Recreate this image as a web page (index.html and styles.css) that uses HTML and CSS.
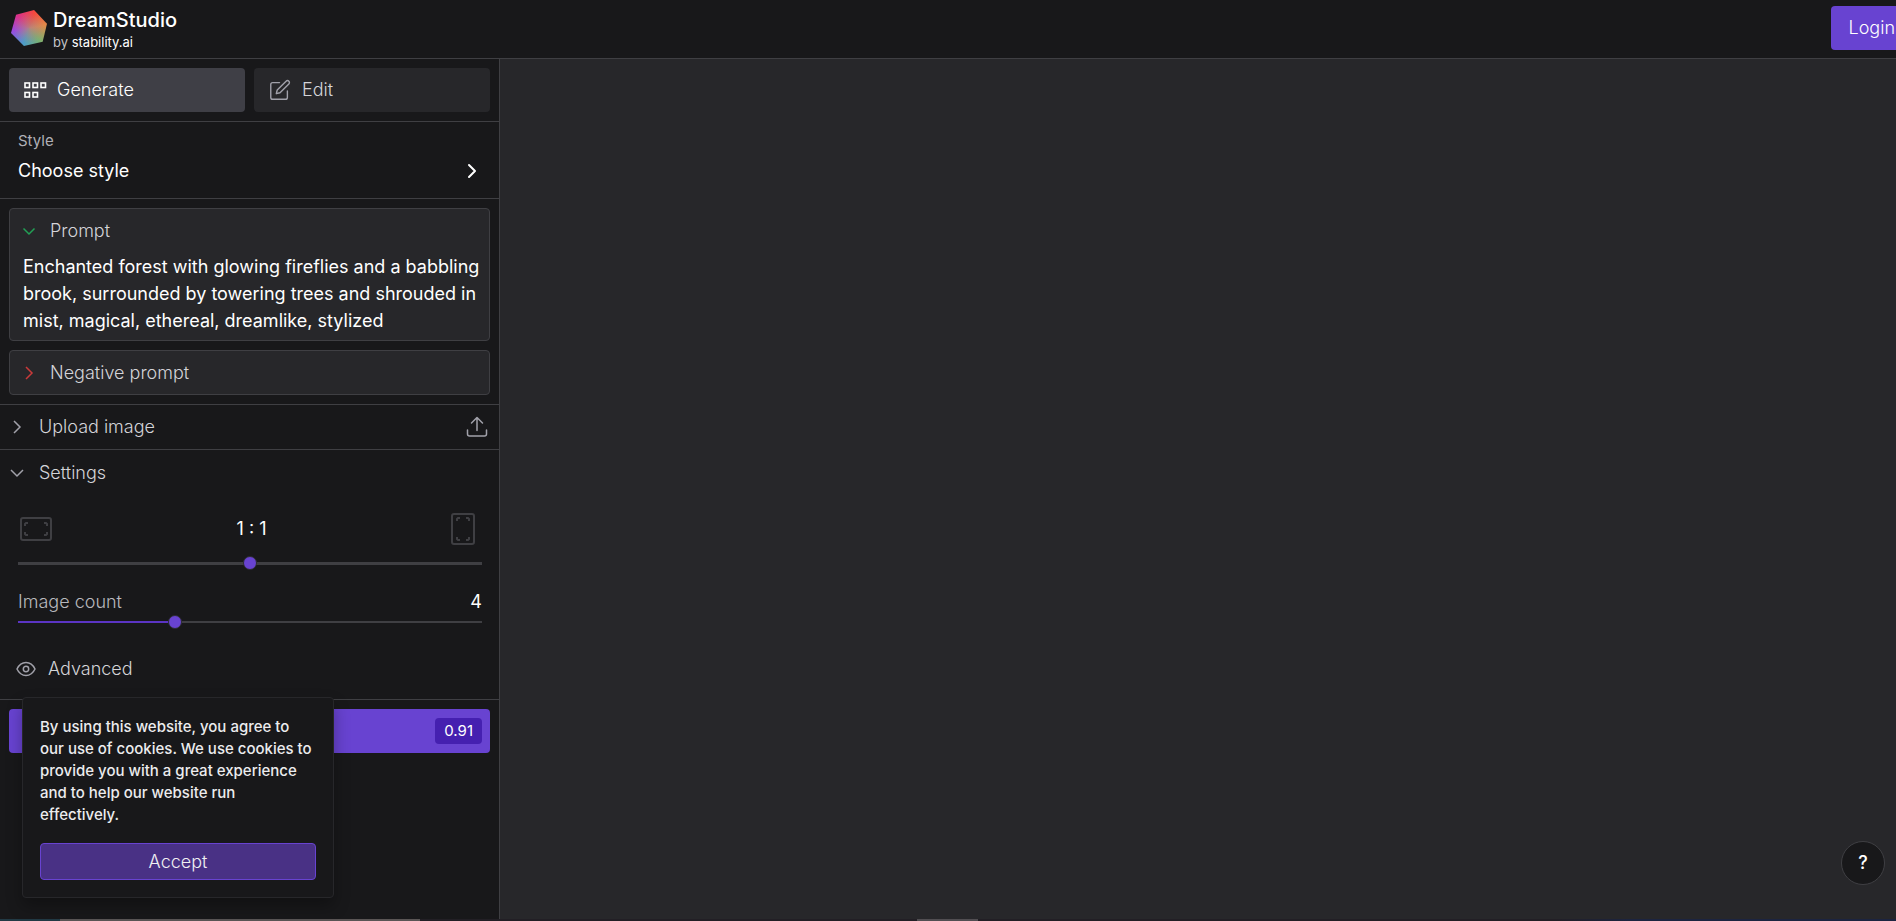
FILE: index.html
```html
<!DOCTYPE html>
<html lang="en">
<head>
    <meta charset="UTF-8">
    <meta name="viewport" content="width=device-width, initial-scale=1.0">
    <title>DreamStudio</title>
    <link rel="stylesheet" href="styles.css">
</head>
<body>
    <header class="topbar">
        <div class="brand">
            <div class="logo" aria-hidden="true"></div>
            <div class="brand-text">
                <h1>DreamStudio</h1>
                <p class="byline">by <a href="#">stability.ai</a></p>
            </div>
        </div>
        <button class="login">Login</button>
    </header>

    <div class="workspace">
        <aside class="sidebar">
            <nav class="tabs">
                <button class="tab active">
                    <svg width="24" height="18" viewBox="0 0 24 18" fill="none" stroke="currentColor" stroke-width="1.6">
                        <rect x="2" y="2" width="4.5" height="4.5"/>
                        <rect x="10" y="2" width="4.5" height="4.5"/>
                        <rect x="18" y="2" width="4.5" height="4.5"/>
                        <rect x="2" y="11.5" width="4.5" height="4.5"/>
                        <rect x="10" y="11.5" width="4.5" height="4.5"/>
                    </svg>
                    Generate
                </button>
                <button class="tab">
                    <svg width="24" height="24" viewBox="-1 -1 26 26" fill="none" stroke="currentColor" stroke-width="1.5" stroke-linecap="round" stroke-linejoin="round">
                        <path d="M11.5 4H4a2 2 0 0 0-2 2v14a2 2 0 0 0 2 2h14a2 2 0 0 0 2-2v-7"/>
                        <path d="M18.6 2.4a2.1 2.1 0 0 1 3 3L12 15l-4 1 1-4z"/>
                    </svg>
                    Edit
                </button>
            </nav>

            <button class="style-picker">
                <span>
                    <span class="style-label">Style</span>
                    <span class="style-value">Choose style</span>
                </span>
                <svg width="10" height="16" viewBox="0 0 10 16" fill="none" stroke="currentColor" stroke-width="2" stroke-linecap="round" stroke-linejoin="round"><path d="M2 2l6 6-6 6"/></svg>
            </button>

            <section class="prompts">
                <div class="box">
                    <label class="box-title" for="prompt">
                        <svg class="green" width="14" height="14" viewBox="0 0 14 14" fill="none" stroke="currentColor" stroke-width="1.5"><path d="M1.5 4.5L7 10l5.5-5.5"/></svg>
                        Prompt
                    </label>
                    <textarea id="prompt" rows="3">Enchanted forest with glowing fireflies and a babbling brook, surrounded by towering trees and shrouded in mist, magical, ethereal, dreamlike, stylized</textarea>
                </div>
                <button class="box box-title">
                    <svg class="red" width="14" height="14" viewBox="0 0 14 14" fill="none" stroke="currentColor" stroke-width="1.5"><path d="M4 1L10 7l-6 6"/></svg>
                    Negative prompt
                </button>
            </section>

            <button class="row upload">
                <svg width="14" height="14" viewBox="0 0 14 14" fill="none" stroke="currentColor" stroke-width="1.5"><path d="M4 1L10 7l-6 6"/></svg>
                Upload image
                <svg class="upload-icon" width="22" height="22" viewBox="0 0 22 22" fill="none" stroke="currentColor" stroke-width="1.5" stroke-linecap="round" stroke-linejoin="round">
                    <path d="M11 14.5V1.75M5.5 7L11 1.5 16.5 7"/>
                    <path d="M1.5 14v4a2 2 0 0 0 2 2h15a2 2 0 0 0 2-2v-4"/>
                </svg>
            </button>

            <section class="settings">
                <button class="row">
                    <svg width="14" height="14" viewBox="0 0 14 14" fill="none" stroke="currentColor" stroke-width="1.5"><path d="M1 4l6 6 6-6"/></svg>
                    Settings
                </button>

                <div class="ratio">
                    <div class="ratio-head">
                        <svg width="32" height="24" viewBox="0 0 32 24" fill="none" stroke="currentColor" stroke-width="2">
                            <rect x="1" y="1" width="30" height="22" rx="2"/>
                            <path d="M5 9V7l1-1h2M24 6h2l1 1v2M27 15v2l-1 1h-2M8 18H6l-1-1v-2"/>
                        </svg>
                        <label for="ratio">1 : 1</label>
                        <svg width="24" height="32" viewBox="0 0 24 32" fill="none" stroke="currentColor" stroke-width="2">
                            <rect x="1" y="1" width="22" height="30" rx="2"/>
                            <path d="M6 8V6l1-1h2M15 5h2l1 1v2M18 24v2l-1 1h-2M9 27H7l-1-1v-2"/>
                        </svg>
                    </div>
                    <input class="slider thick" type="range" id="ratio" min="0" max="10" value="5">
                </div>

                <div class="count">
                    <div class="count-head">
                        <label for="count">Image count</label>
                        <output for="count">4</output>
                    </div>
                    <input class="slider filled" type="range" id="count" min="1" max="10" value="4" style="--fill: 33.3%">
                </div>

                <button class="advanced">
                    <svg width="20" height="16" viewBox="0 0 20 16" fill="none" stroke="currentColor" stroke-width="1.5">
                        <path d="M1 8c2-4.2 5.3-6.5 9-6.5S17 3.800 19 8c-2 4.200-5.300 6.500-9 6.500S3 12.200 1 8z"/>
                        <circle cx="10" cy="8" r="2.7"/>
                    </svg>
                    Advanced
                </button>
            </section>

            <div class="actions">
                <button class="dream"><span class="cost">0.91</span></button>
            </div>
        </aside>
        <main class="canvas"></main>
    </div>

    <div class="taskbar"><span class="search"></span><span class="window"></span></div>

    <div class="cookies">
        <p>By using this website, you agree to our use of cookies. We use cookies to provide you with a great experience and to help our website run effectively.</p>
        <button class="accept">Accept</button>
    </div>

    <button class="help">?</button>
</body>
</html>
```
FILE: styles.css
```css
* {
    box-sizing: border-box;
}

body {
    margin: 0;
    height: 100vh;
    display: flex;
    flex-direction: column;
    overflow: hidden;
    background-color: #18181a;
    color: #fff;
    font-family: Inter, sans-serif;
    font-size: 18px;
    line-height: 26px;
}

h1, p {
    margin: 0;
}

a {
    color: inherit;
    text-decoration: none;
}

button, textarea {
    font: inherit;
    color: inherit;
    background: none;
    border: none;
    margin: 0;
    padding: 0;
    text-align: left;
    cursor: pointer;
}

svg {
    display: block;
    flex: none;
}

.topbar {
    display: flex;
    justify-content: space-between;
    align-items: center;
    height: 59px;
    flex: none;
    padding: 0 0 2px 11px;
    border-bottom: 1px solid #3f3f43;
}

.brand {
    display: flex;
    align-items: center;
    gap: 6px;
}

.brand-text {
    padding-top: 4px;
}

.logo {
    width: 36px;
    height: 36px;
    clip-path: polygon(64% 0, 100% 38%, 88% 88%, 36% 100%, 0 64%, 14% 13%);
    background: radial-gradient(circle, rgba(180, 130, 130, 0.9), rgba(180, 130, 130, 0) 60%),
        conic-gradient(from 20deg, #f5493d, #e08a4a 60deg, #7bb070 120deg, #4c9cc8 180deg, #9a4be0 240deg, #dc3186 300deg, #f5493d);
}

h1 {
    font-size: 20px;
    font-weight: 500;
    line-height: 24px;
}

.byline {
    font-size: 13px;
    line-height: 20px;
    color: #c4c4c8;
}

.byline a {
    color: #fff;
}

.login {
    height: 44px;
    padding: 0 18px;
    margin-right: -17px;
    border-radius: 4px;
    background-color: #6843d1;
    font-weight: 300;
}

.workspace {
    flex: 1;
    display: flex;
    min-height: 0;
}

.sidebar {
    width: 500px;
    flex: none;
    border-right: 1px solid #3f3f43;
}

.canvas {
    flex: 1;
    background-color: #27272a;
}

.tabs {
    display: flex;
    gap: 9px;
    padding: 9px;
    border-bottom: 1px solid #3f3f43;
}

.tab {
    flex: 1;
    display: flex;
    align-items: center;
    gap: 10px;
    height: 44px;
    padding: 0 14px;
    border-radius: 4px;
    background-color: #27272a;
    color: #d4d4d8;
    font-weight: 300;
}

.tab svg {
    color: #a1a1aa;
}

.tab.active {
    background-color: #3f3f46;
    color: #fff;
}

.tab.active svg {
    color: #fff;
}

.style-picker {
    display: flex;
    justify-content: space-between;
    align-items: flex-end;
    width: 100%;
    height: 77px;
    padding: 0 22px 14px 18px;
    border-bottom: 1px solid #3f3f43;
}

.style-label, .style-value {
    display: block;
}

.style-label {
    font-size: 15px;
    line-height: 34px;
    color: #b0b0b6;
}

.style-picker svg {
    margin-bottom: 5px;
}

.prompts {
    display: flex;
    flex-direction: column;
    gap: 9px;
    padding: 9px;
    border-bottom: 1px solid #3f3f43;
}

.box {
    border: 1px solid #3f3f43;
    border-radius: 4px;
    background-color: #27272a;
}

.box-title {
    display: flex;
    align-items: center;
    gap: 14px;
    height: 44px;
    padding: 0 12px;
    color: #d4d4d8;
    font-weight: 300;
}

.box.box-title {
    height: 45px;
}

.box textarea {
    display: block;
    width: 100%;
    height: 87px;
    padding: 0 4px 0 13px;
    line-height: 27px;
    resize: none;
    outline: none;
    overflow: hidden;
}

.green {
    color: #22a055;
}

.red {
    color: #c93a3a;
}

.row {
    display: flex;
    align-items: center;
    gap: 15px;
    width: 100%;
    height: 45px;
    padding: 0 11px 0 10px;
    color: #d4d4d8;
    font-weight: 300;
}

.row svg, .advanced svg {
    color: #a1a1aa;
}

.upload {
    border-bottom: 1px solid #3f3f43;
}

.upload-icon {
    margin-left: auto;
}

.settings {
    padding-bottom: 17px;
    border-bottom: 1px solid #3f3f43;
}

.ratio, .count {
    padding: 0 17px 0 18px;
}

.ratio-head {
    display: flex;
    justify-content: space-between;
    align-items: center;
    padding: 18px 7px 0 2px;
    color: #3f3f43;
}

.ratio-head label {
    color: #fff;
}

.slider {
    -webkit-appearance: none;
    appearance: none;
    display: block;
    width: 100%;
    height: 14px;
    margin: 0;
    background: linear-gradient(#3f3f43, #3f3f43) center / 100% 2px no-repeat;
    cursor: pointer;
}

.slider.thick {
    margin-top: 11px;
    background-size: 100% 3px;
}

.slider.filled {
    background-image: linear-gradient(to right, #5b34c4 var(--fill), #3f3f43 var(--fill));
}

.slider::-webkit-slider-thumb {
    -webkit-appearance: none;
    width: 14px;
    height: 14px;
    border: 1px solid #2c2c30;
    border-radius: 50%;
    background-color: #6843d1;
}

.count-head {
    display: flex;
    justify-content: space-between;
    padding-top: 19px;
    color: #b8b8be;
    font-weight: 300;
}

.count-head output {
    color: #fff;
    font-weight: 400;
}

.advanced {
    display: flex;
    align-items: center;
    gap: 12px;
    padding: 27px 16px 0;
    color: #d4d4d8;
    font-weight: 300;
}

.actions {
    padding: 9px;
}

.dream {
    display: flex;
    justify-content: flex-end;
    align-items: center;
    width: 100%;
    height: 44px;
    padding: 0 8px;
    border-radius: 4px;
    background-color: #6843d1;
}

.cost {
    padding: 0 9px;
    border-radius: 4px;
    background-color: #4520b0;
    font-size: 15px;
}

.cookies {
    position: absolute;
    left: 22px;
    bottom: 23px;
    width: 312px;
    padding: 18px 17px 17px;
    border: 1px solid #27272a;
    border-radius: 4px;
    background-color: #18181a;
    box-shadow: 0 8px 16px rgba(0, 0, 0, 0.3);
}

.cookies p {
    font-size: 15px;
    font-weight: 500;
    line-height: 22px;
    color: #ececee;
}

.accept {
    width: 100%;
    height: 37px;
    margin-top: 17px;
    border: 1px solid #6843d1;
    border-radius: 4px;
    background-color: #493185;
    color: #f0f0f2;
    font-weight: 300;
    text-align: center;
}

.help {
    position: absolute;
    right: 11px;
    bottom: 36px;
    width: 44px;
    height: 44px;
    border: 1px solid #3f3f43;
    border-radius: 50%;
    background-color: #18181a;
    font-weight: 500;
    text-align: center;
}

.taskbar {
    display: flex;
    gap: 497px;
    height: 2px;
    flex: none;
    padding-left: 60px;
    background: linear-gradient(to right, #223a45 60px, #221f25 60px, #221f25 82%, #1c2440 86%);
}

.search {
    width: 360px;
    background-color: #5a5555;
}

.window {
    width: 61px;
    background-color: #514e52;
}
```
